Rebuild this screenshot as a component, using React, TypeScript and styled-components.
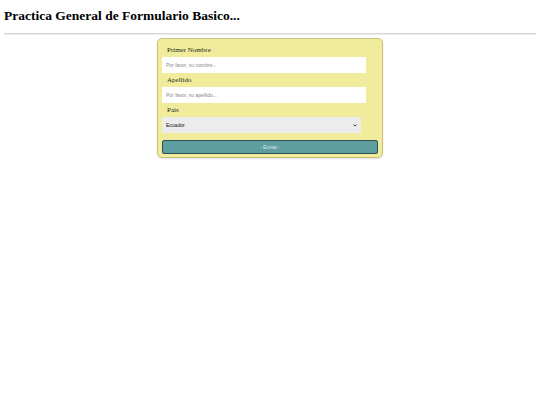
import React from "react";
import styled, { createGlobalStyle } from "styled-components";

const Global = createGlobalStyle`
  html, body { margin: 0; padding: 0; background: #fff; }
  body { padding: 4px; font-family: "Liberation Serif", "Times New Roman", serif; }
`;

const Title = styled.h2`
  margin: 0;
  padding-top: 4px;
  font-size: 13.5px;
  line-height: 16px;
  font-weight: bold;
  color: #000;
`;

const Rule = styled.hr`
  margin: 9px 0 0;
  border: none;
  border-top: 1px solid #d6d6d6;
  border-bottom: 1px solid #ececec;
`;

const Wrap = styled.div`
  display: flex;
  justify-content: center;
  padding-top: 3px;
`;

const Form = styled.form`
  width: 226px;
  box-sizing: border-box;
  background: #f0ec9c;
  border: 1px solid #c9c27a;
  border-radius: 5px;
  box-shadow: 0 1px 2px rgba(0, 0, 0, 0.12);
  padding: 5px 4px 3px 4px;
  display: flex;
  flex-direction: column;
`;

const Label = styled.label`
  font-size: 7px;
  line-height: 12px;
  color: #26261e;
  padding-left: 5px;
`;

const Input = styled.input`
  display: block;
  width: 204px;
  height: 16px;
  box-sizing: border-box;
  border: none;
  background: #fff;
  margin: 1px 0 1px;
  padding: 0 4px;
  font-family: "Liberation Sans", Arial, sans-serif;
  font-size: 5px;
  &::placeholder { color: #888; }
`;

const SelectBox = styled.div`
  position: relative;
  width: 199px;
  height: 16px;
  margin-top: 1px;
`;

const Select = styled.select`
  display: block;
  appearance: none;
  -webkit-appearance: none;
  width: 100%;
  height: 16px;
  box-sizing: border-box;
  border: none;
  border-radius: 0;
  background: #ececec;
  padding: 0 4px;
  font-family: "Liberation Sans", Arial, sans-serif;
  font-size: 5px;
  line-height: 16px;
  color: #111;
`;

const Chevron = styled.svg`
  position: absolute;
  right: 4px;
  top: 7px;
  width: 4px;
  height: 3px;
  pointer-events: none;
`;

const Button = styled.button`
  display: block;
  margin-top: 7px;
  width: 100%;
  height: 14px;
  box-sizing: border-box;
  background: #5f9ea0;
  border: 1px solid #2f5050;
  border-radius: 2px;
  color: #d8eeee;
  font-family: "Liberation Sans", Arial, sans-serif;
  font-size: 5px;
  padding: 0;
`;

export default function App() {
  return (
    <>
      <Global />
      <Title>Practica General de Formulario Basico...</Title>
      <Rule />
      <Wrap>
        <Form onSubmit={(e) => e.preventDefault()}>
          <Label>Primer Nombre</Label>
          <Input placeholder="Por favor, su nombre..." />
          <Label>Apellido</Label>
          <Input placeholder="Por favor, su apellido..." />
          <Label>País</Label>
          <SelectBox>
            <Select defaultValue="Ecuador">
              <option>Ecuador</option>
              <option>Perú</option>
              <option>Colombia</option>
            </Select>
            <Chevron viewBox="0 0 10 8">
              <path d="M1 1.5 L5 5.5 L9 1.5" fill="none" stroke="#222" strokeWidth="2.4" />
            </Chevron>
          </SelectBox>
          <Button type="submit">- Enviar -</Button>
        </Form>
      </Wrap>
    </>
  );
}
